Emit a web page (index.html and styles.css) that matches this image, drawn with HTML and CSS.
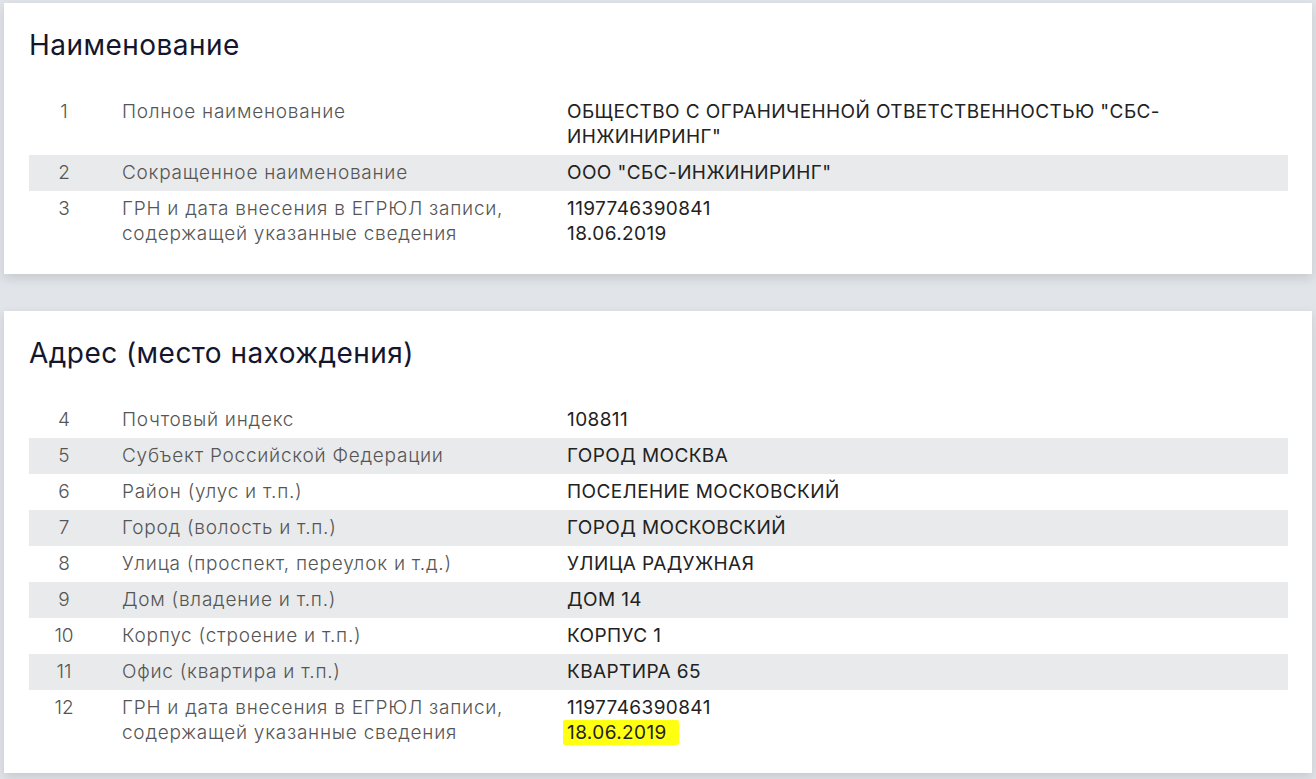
FILE: index.html
```html
<!DOCTYPE html>
<html lang="ru">
  <head>
    <meta charset="UTF-8" />
    <title>Сведения ЕГРЮЛ</title>
    <link rel="stylesheet" href="styles.css">
  </head>
  <body>
    <div class="card">
      <h2>Наименование</h2>
      <table class="info">
        <tr>
          <td class="num">1</td>
          <td class="label">Полное наименование</td>
          <td class="value">ОБЩЕСТВО С ОГРАНИЧЕННОЙ ОТВЕТСТВЕННОСТЬЮ "СБС-<br>ИНЖИНИРИНГ"</td>
        </tr>
        <tr>
          <td class="num">2</td>
          <td class="label">Сокращенное наименование</td>
          <td class="value">ООО "СБС-ИНЖИНИРИНГ"</td>
        </tr>
        <tr>
          <td class="num">3</td>
          <td class="label">ГРН и дата внесения в ЕГРЮЛ записи,<br>содержащей указанные сведения</td>
          <td class="value">1197746390841<br>18.06.2019</td>
        </tr>
      </table>
    </div>

    <div class="card">
      <h2>Адрес (место нахождения)</h2>
      <table class="info">
        <tr>
          <td class="num">4</td>
          <td class="label">Почтовый индекс</td>
          <td class="value">108811</td>
        </tr>
        <tr>
          <td class="num">5</td>
          <td class="label">Субъект Российской Федерации</td>
          <td class="value">ГОРОД МОСКВА</td>
        </tr>
        <tr>
          <td class="num">6</td>
          <td class="label">Район (улус и т.п.)</td>
          <td class="value">ПОСЕЛЕНИЕ МОСКОВСКИЙ</td>
        </tr>
        <tr>
          <td class="num">7</td>
          <td class="label">Город (волость и т.п.)</td>
          <td class="value">ГОРОД МОСКОВСКИЙ</td>
        </tr>
        <tr>
          <td class="num">8</td>
          <td class="label">Улица (проспект, переулок и т.д.)</td>
          <td class="value">УЛИЦА РАДУЖНАЯ</td>
        </tr>
        <tr>
          <td class="num">9</td>
          <td class="label">Дом (владение и т.п.)</td>
          <td class="value">ДОМ 14</td>
        </tr>
        <tr>
          <td class="num">10</td>
          <td class="label">Корпус (строение и т.п.)</td>
          <td class="value">КОРПУС 1</td>
        </tr>
        <tr>
          <td class="num">11</td>
          <td class="label">Офис (квартира и т.п.)</td>
          <td class="value">КВАРТИРА 65</td>
        </tr>
        <tr>
          <td class="num">12</td>
          <td class="label">ГРН и дата внесения в ЕГРЮЛ записи,<br>содержащей указанные сведения</td>
          <td class="value">1197746390841<br><span class="marker">18.06.2019</span></td>
        </tr>
      </table>
    </div>
  </body>
</html>
```

FILE: styles.css
```css
* {
  margin: 0;
  padding: 0;
  box-sizing: border-box;
}

body {
  font-family: Inter, "Noto Sans", sans-serif;
  background-color: #e1e4e8;
  padding: 3px 4px;
}

.card {
  background-color: white;
  box-shadow: 0 4px 10px rgba(40, 50, 70, 0.15);
  padding: 26px 24px 22px 25px;
  margin-bottom: 37px;
}

h2 {
  font-size: 28px;
  font-weight: 400;
  letter-spacing: 0.45px;
  color: #14162e;
  line-height: 32px;
  margin-bottom: 33px;
}

.info {
  width: 100%;
  border-collapse: collapse;
  font-size: 19px;
  line-height: 25px;
}

.info tr:nth-child(even) {
  background-color: #e9eaeb;
}

.info td {
  padding: 5px 0 6px;
  vertical-align: top;
}

.num {
  width: 70px;
  text-align: center;
  color: #555;
  font-weight: 300;
}

.label {
  width: 468px;
  padding-left: 23px !important;
  color: #555;
  font-weight: 300;
  letter-spacing: 0.75px;
}

.value {
  color: #222;
  letter-spacing: 0.4px;
}

.marker {
  background-color: #ffff12;
  padding: 1px 12px 1px 4px;
  margin-left: -4px;
  border-radius: 2px;
}
```
